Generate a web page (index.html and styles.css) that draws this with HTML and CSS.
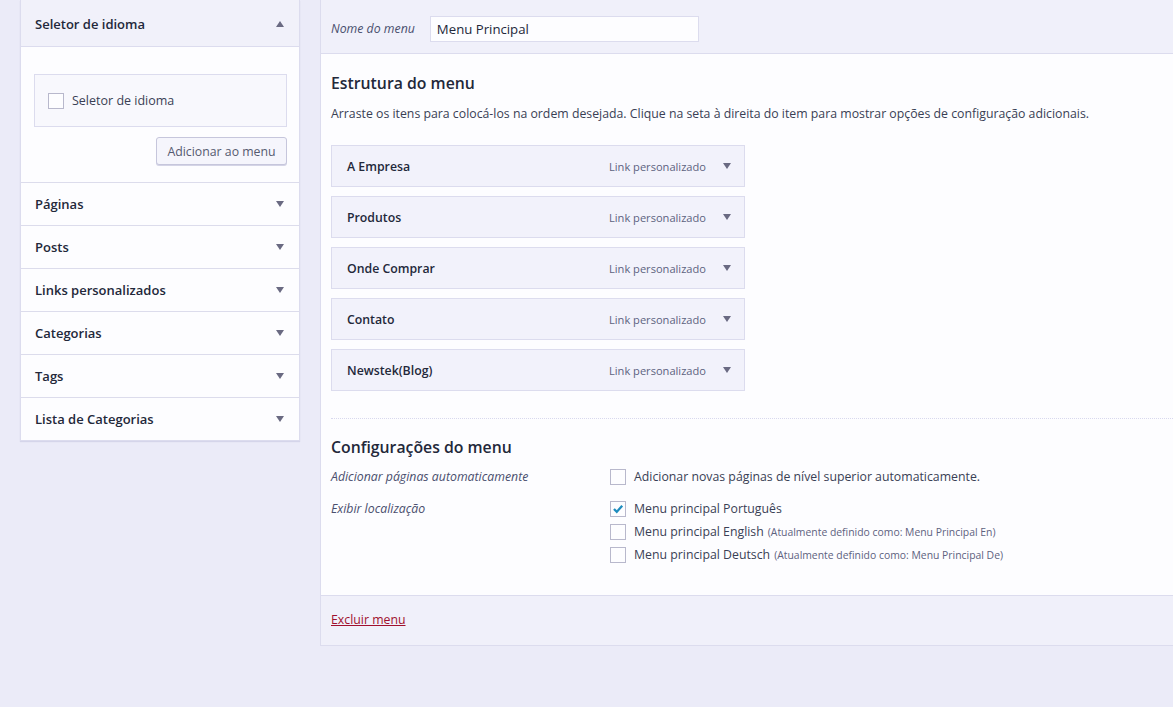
FILE: index.html
```html
<!DOCTYPE html>
<html lang="pt-BR">
<head>
<meta charset="utf-8">
<title>Menus</title>
<link rel="stylesheet" href="styles.css">
</head>
<body>
<div class="layout">
  <aside class="sidebar">
    <div class="acc open">
      <div class="acc-title"><span>Seletor de idioma</span><span class="arrow up"></span></div>
      <div class="acc-body">
        <div class="choice-box">
          <label class="check-row"><span class="cb"></span>Seletor de idioma</label>
        </div>
        <div class="btn-row"><button class="btn">Adicionar ao menu</button></div>
      </div>
    </div>
    <div class="acc"><div class="acc-title"><span>Páginas</span><span class="arrow"></span></div></div>
    <div class="acc"><div class="acc-title"><span>Posts</span><span class="arrow"></span></div></div>
    <div class="acc"><div class="acc-title"><span>Links personalizados</span><span class="arrow"></span></div></div>
    <div class="acc"><div class="acc-title"><span>Categorias</span><span class="arrow"></span></div></div>
    <div class="acc"><div class="acc-title"><span>Tags</span><span class="arrow"></span></div></div>
    <div class="acc"><div class="acc-title"><span>Lista de Categorias</span><span class="arrow"></span></div></div>
  </aside>

  <main class="main">
    <div class="main-header">
      <label class="name-label">Nome do menu</label>
      <div class="name-input">Menu Principal</div>
    </div>
    <div class="main-body">
      <h3 class="section-title">Estrutura do menu</h3>
      <p class="desc">Arraste os itens para colocá-los na ordem desejada. Clique na seta à direita do item para mostrar opções de configuração adicionais.</p>
      <ul class="menu-items">
        <li class="menu-item"><span class="item-title">A Empresa</span><span class="item-type">Link personalizado</span><span class="arrow"></span></li>
        <li class="menu-item"><span class="item-title">Produtos</span><span class="item-type">Link personalizado</span><span class="arrow"></span></li>
        <li class="menu-item"><span class="item-title">Onde Comprar</span><span class="item-type">Link personalizado</span><span class="arrow"></span></li>
        <li class="menu-item"><span class="item-title">Contato</span><span class="item-type">Link personalizado</span><span class="arrow"></span></li>
        <li class="menu-item"><span class="item-title">Newstek(Blog)</span><span class="item-type">Link personalizado</span><span class="arrow"></span></li>
      </ul>
      <div class="divider"></div>
      <h3 class="section-title settings-title">Configurações do menu</h3>
      <div class="settings">
        <div class="set-label first">Adicionar páginas automaticamente</div>
        <div class="set-options first">
          <label class="opt"><span class="cb"></span>Adicionar novas páginas de nível superior automaticamente.</label>
        </div>
        <div class="set-label">Exibir localização</div>
        <div class="set-options">
          <label class="opt"><span class="cb checked"><svg viewBox="0 0 16 16" width="16" height="16"><path d="M3.4 8 L6.6 11.3 L12.8 4.2" fill="none" stroke="#1e8cbe" stroke-width="2.6"/></svg></span>Menu principal Português</label>
          <label class="opt"><span class="cb"></span>Menu principal English <small>(Atualmente definido como: Menu Principal En)</small></label>
          <label class="opt"><span class="cb"></span>Menu principal Deutsch <small>(Atualmente definido como: Menu Principal De)</small></label>
        </div>
      </div>
    </div>
    <div class="main-footer">
      <a class="delete" href="#">Excluir menu</a>
    </div>
  </main>
</div>
</body>
</html>
```

FILE: styles.css
```css
* { box-sizing: border-box; }
html, body { margin: 0; padding: 0; }
body {
  background: #ebebf8;
  font-family: "Open Sans", "Noto Sans", sans-serif;
  font-size: 12.3px;
  color: #23283a;
  width: 1173px;
  height: 707px;
  overflow: hidden;
}
.layout {
  display: flex;
  align-items: flex-start;
  gap: 20px;
  padding-left: 20px;
}

/* Sidebar */
.sidebar {
  width: 280px;
  flex: none;
  background: #fdfdff;
  border: 1px solid #dcdcee;
  border-top: none;
  box-shadow: 0 1px 1px rgba(60, 60, 140, 0.12);
}
.acc { border-top: 1px solid #dcdcec; }
.acc:first-child { border-top: none; }
.acc-title {
  height: 42px;
  display: flex;
  align-items: center;
  justify-content: space-between;
  padding: 0 14px 0 14px;
  font-size: 13px;
  font-weight: 600;
  color: #23283a;
}
.acc.open .acc-title {
  height: 47px;
  padding-top: 1px;
  background: #f1f1fa;
  border-bottom: 1px solid #dcdcee;
}
.arrow {
  width: 0; height: 0;
  border-left: 4.5px solid transparent;
  border-right: 4.5px solid transparent;
  border-top: 6px solid #6a6a82;
  margin-right: 1px;
}
.arrow.up {
  border-top: none;
  border-bottom: 6px solid #6a6a82;
}
.acc-body {
  padding: 27px 12px 17px 13px;
}
.choice-box {
  border: 1px solid #dcdcee;
  background: #f8f8fd;
  height: 53px;
  display: flex;
  align-items: center;
  padding-left: 13px;
}
.check-row {
  display: flex;
  align-items: center;
  gap: 8px;
  font-size: 12.5px;
  color: #3a3f55;
}
.cb {
  width: 16px; height: 16px;
  border: 1px solid #b8b8cc;
  background: #fdfdff;
  flex: none;
  display: inline-flex;
  align-items: center;
  justify-content: center;
}
.btn-row {
  display: flex;
  justify-content: flex-end;
  margin-top: 10px;
}
.btn {
  width: 131px;
  height: 28px;
  padding: 0;
  font-family: inherit;
  font-size: 12.3px;
  color: #555a70;
  background: #f5f5fc;
  border: 1px solid #c6c6dc;
  border-radius: 3px;
  box-shadow: 0 1px 0 #d4d4e6;
}

/* Main */
.main {
  flex: 1;
  min-width: 0;
  border-left: 1px solid #dcdcee;
  border-bottom: 1px solid #dcdcee;
  background: #fdfdff;
}
.main-header {
  height: 54px;
  background: #f0f0fa;
  border-bottom: 1px solid #dcdcee;
  display: flex;
  align-items: center;
  padding: 4px 0 0 10px;
  gap: 15px;
}
.name-label {
  font-style: italic;
  color: #4a4f6e;
  font-size: 12.3px;
}
.name-input {
  width: 269px;
  height: 26px;
  background: #fdfdff;
  border: 1px solid #dcdcee;
  display: flex;
  align-items: center;
  padding-left: 6px;
  font-size: 13.2px;
  color: #23283a;
}
.main-body {
  padding: 17px 0 30px 10px;
}
.section-title {
  margin: 0;
  font-size: 15.8px;
  font-weight: 600;
  line-height: 24px;
  color: #23283a;
}
.desc {
  margin: 10px 0 0;
  font-size: 12.3px;
  line-height: 18px;
  color: #3a3f55;
}
.menu-items {
  list-style: none;
  margin: 22px 0 0;
  padding: 0;
  display: flex;
  flex-direction: column;
  gap: 9px;
}
.menu-item {
  width: 414px;
  height: 42px;
  border: 1px solid #dcdcee;
  background: #f2f2fb;
  display: flex;
  align-items: center;
  padding: 0 12px 0 15px;
}
.item-title {
  font-weight: 600;
  font-size: 12.3px;
  flex: 1;
}
.item-type {
  font-size: 11.1px;
  color: #5d6280;
  margin-right: 17px;
}
.divider {
  margin-top: 27px;
  border-top: 1px dotted #d8d8ee;
}
.settings-title { margin-top: 16px; }
.settings {
  display: grid;
  grid-template-columns: 279px 1fr;
  margin-top: 8px;
}
.set-label {
  font-style: italic;
  color: #4a4f6e;
  font-size: 12.3px;
  line-height: 20px;
}
.set-label.first, .set-options.first { margin-bottom: 12px; }
.set-options {
  display: flex;
  flex-direction: column;
  gap: 3px;
}
.opt {
  display: flex;
  align-items: center;
  gap: 8px;
  font-size: 12.3px;
  line-height: 20px;
  color: #3a3f55;
}
.opt small {
  font-size: 10.4px;
  color: #5d6280;
  margin-left: -4px;
}
.main-footer {
  height: 50px;
  padding-bottom: 2px;
  background: #f0f0fa;
  border-top: 1px solid #dcdcee;
  display: flex;
  align-items: center;
  padding-left: 10px;
}
.delete {
  color: #a0102e;
  font-size: 12.3px;
  text-decoration: underline;
}
```
